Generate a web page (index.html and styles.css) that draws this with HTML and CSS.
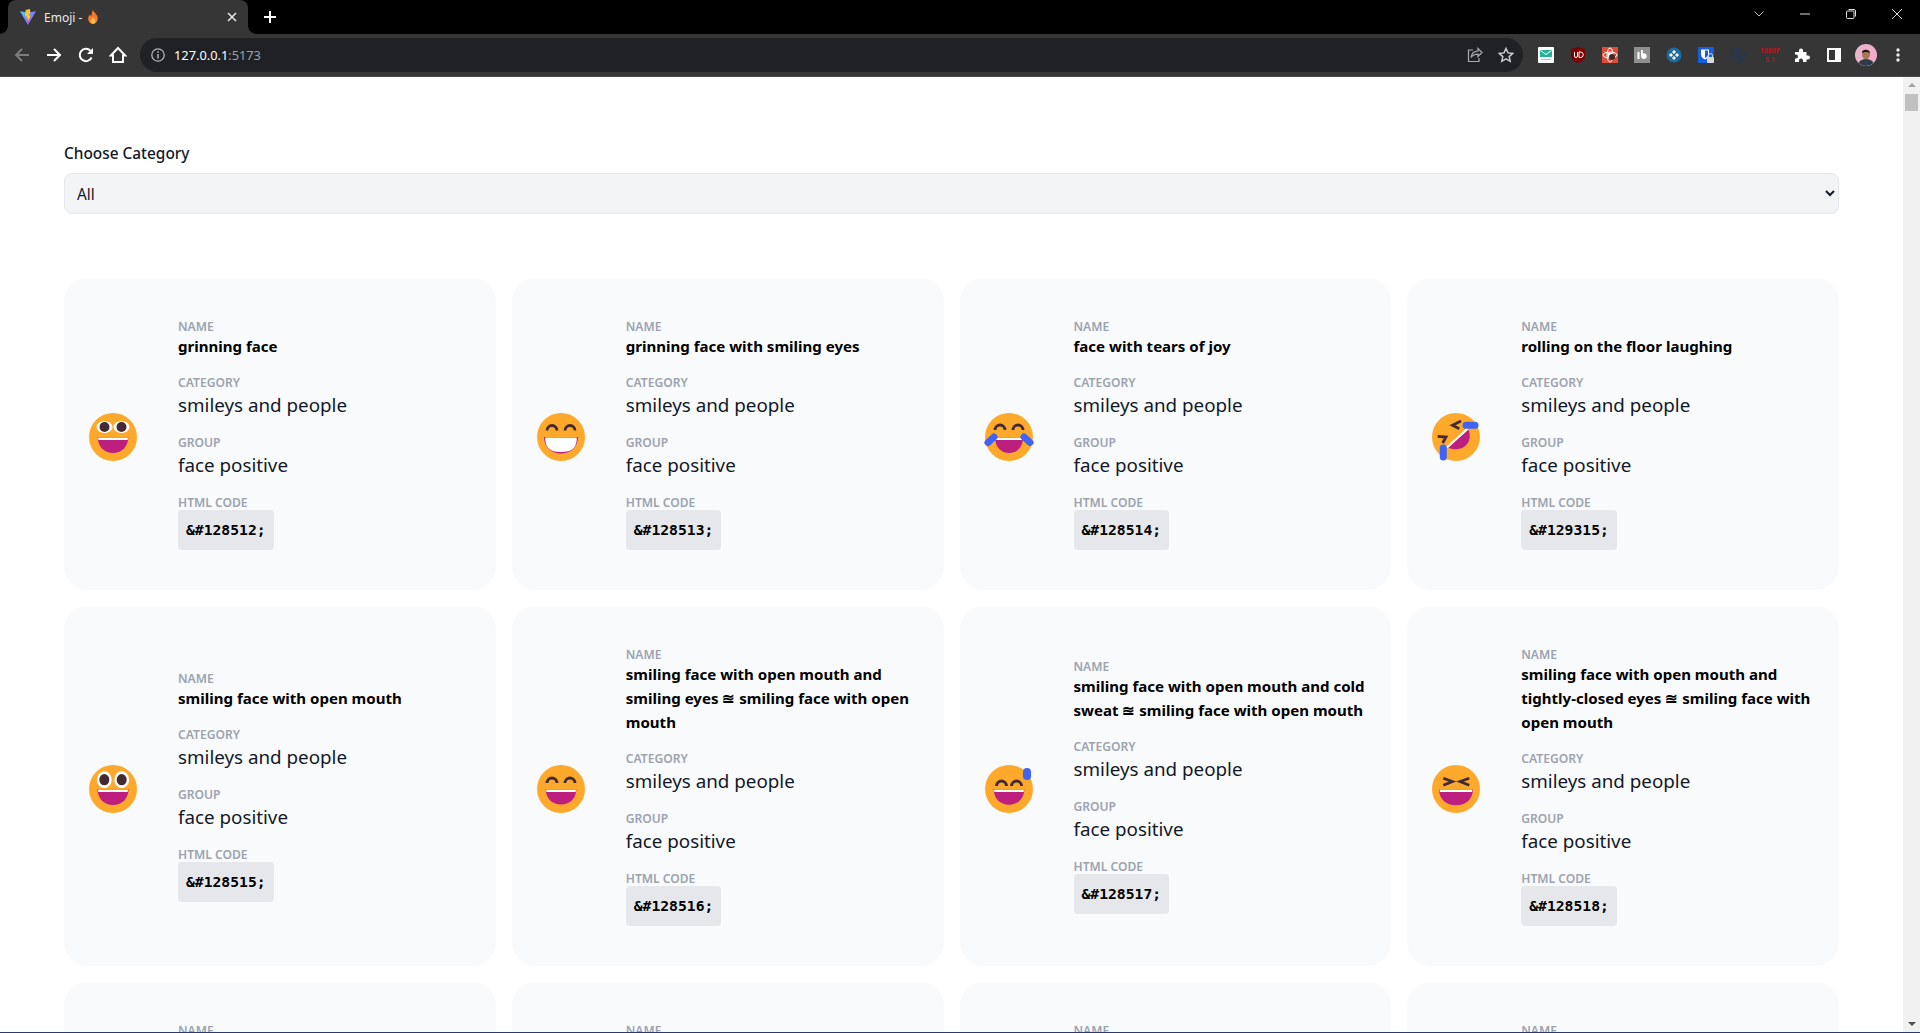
FILE: index.html
```html
<!DOCTYPE html>
<html lang="en">
<head>
<meta charset="utf-8">
<title>Emoji</title>
<link rel="stylesheet" href="styles.css">
</head>
<body>
<div class="window">
  <header class="titlebar">
    <div class="tab">
      <svg class="favicon" viewBox="0 0 16 16"><defs><linearGradient id="vp" x1="0" y1="0" x2="1" y2="1"><stop offset="0" stop-color="#41d1ff"/><stop offset="1" stop-color="#bd34fe"/></linearGradient></defs><path d="M0 2.2 8 3.4 16 2.2 8 16z" fill="url(#vp)"/><path d="M9.8 0 5.6 1 5.2 7.5 7 7.2 6.6 9.8 8 9.4 7.8 12.5 11 6.6 9 7 10.4 2.6z" fill="#ffc824"/></svg>
      <span class="tab-title">Emoji -</span>
      <svg class="flame" viewBox="0 0 10 14"><path d="M5 0c.5 2.300 4.800 4.300 4.800 8.600C9.800 11.600 7.600 14 5 14S.2 11.800.2 8.800c0-1.900 1-3.300 1.900-4.200.2 1 .6 1.700 1.300 2C3.600 4 3.700 1.800 5 0z" fill="#f4792b"/><path d="M5 7c.6 1.100 2.400 2.200 2.400 4.200 0 1.500-1.100 2.600-2.400 2.600s-2.400-1.100-2.400-2.600C2.600 9.500 4.400 8.500 5 7z" fill="#fdbb4a"/></svg>
      <svg class="tab-close" viewBox="0 0 10 10"><path d="M1 1l8 8M9 1l-8 8" stroke="#e8eaed" stroke-width="1.500" fill="none"/></svg>
    </div>
    <svg class="newtab" viewBox="0 0 12 12"><path d="M6 0v12M0 6h12" stroke="#fff" stroke-width="2" fill="none"/></svg>
    <div class="winctl">
      <span class="winbtn"><svg width="10" height="6" viewBox="0 0 10 6"><path d="M.5.500 5 5 9.500.500" stroke="#bbb" fill="none"/></svg></span>
      <span class="winbtn"><svg width="10" height="2" viewBox="0 0 10 2"><path d="M0 1h10" stroke="#ddd"/></svg></span>
      <span class="winbtn"><svg width="10" height="10" viewBox="0 0 10 10"><rect x=".5" y="2" width="7.500" height="7.500" rx="1" stroke="#ddd" fill="none"/><path d="M2.500 .5H8a1.500 1.500 0 0 1 1.500 1.500V7.500" stroke="#ddd" fill="none"/></svg></span>
      <span class="winbtn"><svg width="10" height="10" viewBox="0 0 10 10"><path d="M0 0l10 10M10 0 0 10" stroke="#ddd" fill="none"/></svg></span>
    </div>
  </header>
  <nav class="toolbar">
    <span class="navbtn"><svg width="16" height="16" viewBox="0 0 16 16"><path d="M15 8H2M8 2 2 8l6 6" stroke="#7c7c7c" stroke-width="2" fill="none"/></svg></span>
    <span class="navbtn"><svg width="16" height="16" viewBox="0 0 16 16"><path d="M1 8h13M8 2l6 6-6 6" stroke="#fff" stroke-width="2" fill="none"/></svg></span>
    <span class="navbtn"><svg width="16" height="16" viewBox="0 0 16 16"><path d="M13.600 10.500A6.200 6.200 0 1 1 12.400 3.600" stroke="#fff" stroke-width="2" fill="none"/><path d="M15 1v6H9z" fill="#fff"/></svg></span>
    <span class="navbtn"><svg width="18" height="18" viewBox="0 0 18 18"><path d="M9 2 1.800 9.500H4V16h10V9.500h2.200z" stroke="#fff" stroke-width="2" fill="none" stroke-linejoin="miter"/></svg></span>
    <div class="omnibox">
      <svg class="info" width="14" height="14" viewBox="0 0 14 14"><circle cx="7" cy="7" r="6.200" stroke="#b0b3b6" stroke-width="1.300" fill="none"/><path d="M7 6v4.500M7 3.300v1.500" stroke="#b0b3b6" stroke-width="1.500"/></svg>
      <span class="url">127.0.0.1<span class="url-port">:5173</span></span>
      <span class="spacer"></span>
      <svg class="omni-ico" width="16" height="16" viewBox="0 0 16 16"><path d="M11 1.500 15 5.500 11 9.500V7.200C7.500 7.200 5.500 8.300 4 10.500 4.500 6.500 7 4.200 11 3.900z" stroke="#a9abad" stroke-width="1.200" fill="none"/><path d="M6 3H1.500v11.500H12V11" stroke="#a9abad" stroke-width="1.200" fill="none"/></svg>
      <svg class="omni-ico" width="16" height="16" viewBox="0 0 16 16"><path d="M8 1.500l2 4.400 4.800.5-3.600 3.200 1 4.700L8 11.900l-4.200 2.400 1-4.700L1.200 6.400 6 5.900z" stroke="#c8cacc" stroke-width="1.500" fill="none"/></svg>
    </div>
    <div class="extensions">
      <span class="ext"><svg width="16" height="16" viewBox="0 0 16 16"><rect width="16" height="16" rx="1" fill="#fff"/><rect x="2" y="3" width="12" height="7" fill="#27b39a"/><path d="M2.500 3.500 8 7.500l5.500-4" stroke="#fff" fill="none"/><rect x="3" y="12" width="10" height="1" fill="#9cc"/></svg></span>
      <span class="ext"><svg width="14" height="16" viewBox="0 0 14 16"><path d="M7 0 14 2v7c0 3-3 5.500-7 7-4-1.500-7-4-7-7V2z" fill="#800000"/><path d="M3.500 5v4a1.500 1.500 0 0 0 3 0V5M8 5v5.500h1.500a2.700 2.700 0 0 0 0-5.500z" stroke="#fff" fill="none"/></svg></span>
      <span class="ext"><svg width="16" height="16" viewBox="0 0 16 16"><rect width="16" height="16" fill="#dd4b39"/><circle cx="8" cy="8" r="2.500" fill="#fff"/><ellipse cx="8" cy="8" rx="7" ry="3" stroke="#fff" fill="none"/><ellipse cx="8" cy="8" rx="3" ry="7" stroke="#fff" fill="none"/><circle cx="10" cy="10" r="3" fill="#402a22"/></svg></span>
      <span class="ext"><svg width="16" height="16" viewBox="0 0 16 16"><rect width="16" height="16" fill="#8f8f8f"/><path d="M3.500 5h2v7h-2zM7 3h1.800v3.400a2.900 2.900 0 1 1-1.800 2.700z" fill="#fff"/></svg></span>
      <span class="ext"><svg width="16" height="16" viewBox="0 0 16 16"><circle cx="8" cy="8" r="7.500" fill="#1f6b9e"/><path d="M8 3l2 2-2 2-2-2zM8 9l2 2-2 2-2-2zM3 8l2-2 2 2-2 2zM9 8l2-2 2 2-2 2z" fill="#fff"/></svg></span>
      <span class="ext"><svg width="16" height="16" viewBox="0 0 16 16"><rect width="16" height="16" rx="1" fill="#175ddc"/><path d="M3 2.500h8v5c0 2.500-2 4-4 5-2-1-4-2.500-4-5z" fill="#fff"/><path d="M7 3.500h3v4c0 1.700-1.500 2.700-3 3.500z" fill="#175ddc"/><rect x="9" y="10" width="7" height="6" rx="1" fill="#d8d8d8"/><path d="M10.500 10V8.500a2 2 0 0 1 4 0V10" stroke="#d8d8d8" fill="none"/></svg></span>
      <span class="ext"><svg width="16" height="16" viewBox="0 0 16 16"><circle cx="8" cy="8" r="7.200" stroke="#1c3a5e" stroke-width="1" fill="none"/><path d="M5 12 8 4l3 8M6 9.500h4" stroke="#1c3a5e" stroke-width="1.400" fill="none"/></svg></span>
      <span class="ext ext-res">1080P<br>5.1</span>
      <span class="ext"><svg width="16" height="16" viewBox="0 0 16 16"><path d="M1 5h4V3.500a2 2 0 0 1 4 0V5h3.500v3.500H14a2 2 0 0 1 0 4h-1.500V15H9v-1.500a2 2 0 0 0-4 0V15H1v-3.500h1a2 2 0 0 0 0-4H1z" fill="#fff"/></svg></span>
      <span class="ext"><svg width="14" height="14" viewBox="0 0 14 14"><rect x="1" y="1" width="12" height="12" stroke="#fff" stroke-width="2" fill="none"/><rect x="8" y="1" width="5" height="12" fill="#fff"/></svg></span>
      <span class="ext"><svg width="22" height="22" viewBox="0 0 22 22"><defs><linearGradient id="av" x1="0" y1="0" x2="1" y2="0"><stop offset="0" stop-color="#e9b6c9"/><stop offset="1" stop-color="#f2aacb"/></linearGradient></defs><circle cx="11" cy="11" r="11" fill="url(#av)"/><path d="M3.500 19c1.500-3 4.500-4 7.500-4s6 1 7.500 4a11 11 0 0 1-15 0z" fill="#2e3a4a"/><ellipse cx="11" cy="10.500" rx="4" ry="4.800" fill="#a4745b"/><path d="M7 9c-.5-4 7.500-4.500 8 0-2-1.500-6-1.500-8 0z" fill="#1d1718"/></svg></span>
      <span class="ext"><svg width="4" height="14" viewBox="0 0 4 14"><circle cx="2" cy="2" r="1.700" fill="#eee"/><circle cx="2" cy="7" r="1.700" fill="#eee"/><circle cx="2" cy="12" r="1.700" fill="#eee"/></svg></span>
    </div>
  </nav>
  <div class="viewport">
    <main class="page">
      <label class="select-label" for="cat">Choose Category</label>
      <select class="select" id="cat"><option>All</option></select>
      <section class="grid">

        <article class="card">
          <svg class="emoji" viewBox="-25 -32 58 58"><circle r="24" fill="#ffa92c"/><ellipse cx="-8.500" cy="-10" rx="8" ry="6" fill="#fff"/><ellipse cx="8.500" cy="-10" rx="8" ry="6" fill="#fff"/><circle cx="-8.500" cy="-10" r="5" fill="#432a33"/><circle cx="8.500" cy="-10" r="5" fill="#432a33"/><path d="M-15.300 0h30.600c0 9-6 16-15.300 16S-15.300 9-15.300 0z" fill="#bd1f7f"/><path d="M-15 .5h30l-.4 2.400h-29.200z" fill="#fff"/></svg>
          <div class="info-col">
            <div class="field"><span class="label">NAME</span><p class="name">grinning face</p></div>
            <div class="field"><span class="label">CATEGORY</span><p class="value">smileys and people</p></div>
            <div class="field"><span class="label">GROUP</span><p class="value">face positive</p></div>
            <div class="field"><span class="label">HTML CODE</span><code class="code">&amp;#128512;</code></div>
          </div>
        </article>

        <article class="card">
          <svg class="emoji" viewBox="-25 -32 58 58"><circle r="24" fill="#ffa92c"/><path d="M-14 -6.500a5 5 0 0 1 10 0M4 -6.500a5 5 0 0 1 10 0" stroke="#432a33" stroke-width="2.800" fill="none"/><path d="M-17 0H17c0 10-7 16.500-17 16.500S-17 10-17 0z" fill="#bd1f7f"/><path d="M-15.800 .5h31.600c0 5-1 8-3 10.500-3 3-7 4-12.800 4s-9.800-1-12.800-4c-2-2.500-3-5.500-3-10.500z" fill="#fff"/></svg>
          <div class="info-col">
            <div class="field"><span class="label">NAME</span><p class="name">grinning face with smiling eyes</p></div>
            <div class="field"><span class="label">CATEGORY</span><p class="value">smileys and people</p></div>
            <div class="field"><span class="label">GROUP</span><p class="value">face positive</p></div>
            <div class="field"><span class="label">HTML CODE</span><code class="code">&amp;#128513;</code></div>
          </div>
        </article>

        <article class="card">
          <svg class="emoji" viewBox="-25 -32 58 58"><circle r="24" fill="#ffa92c"/><path d="M-14 -7a5 5 0 0 1 10 0M4 -7a5 5 0 0 1 10 0" stroke="#432a33" stroke-width="2.800" fill="none"/><path d="M-14 0H14c0 10-6 16-14 16S-14 10-14 0z" fill="#bd1f7f"/><path d="M-14 .5H14l-.4 2.400h-27.200z" fill="#fff"/><path d="M-21 5.500-15 0M21 5.500 15 0" stroke="#3f63f5" stroke-width="7" stroke-linecap="round" fill="none"/></svg>
          <div class="info-col">
            <div class="field"><span class="label">NAME</span><p class="name">face with tears of joy</p></div>
            <div class="field"><span class="label">CATEGORY</span><p class="value">smileys and people</p></div>
            <div class="field"><span class="label">GROUP</span><p class="value">face positive</p></div>
            <div class="field"><span class="label">HTML CODE</span><code class="code">&amp;#128514;</code></div>
          </div>
        </article>

        <article class="card">
          <svg class="emoji" viewBox="-25 -32 58 58"><circle r="24" fill="#ffa92c"/><path d="M-9 10.500 12-8.500C18 4 8 17-9 10.500z" fill="#bd1f7f"/><path d="M-9 10.500 12-8.500" stroke="#fff" stroke-width="2.200"/><path d="M5-16-3.500-11.700 3.300-8.300M-18.300-.7-10 0-13.300 6" stroke="#432a33" stroke-width="2.800" fill="none"/><path d="M10-11.700H19M-12.700 11V20" stroke="#3f63f5" stroke-width="7" stroke-linecap="round"/></svg>
          <div class="info-col">
            <div class="field"><span class="label">NAME</span><p class="name">rolling on the floor laughing</p></div>
            <div class="field"><span class="label">CATEGORY</span><p class="value">smileys and people</p></div>
            <div class="field"><span class="label">GROUP</span><p class="value">face positive</p></div>
            <div class="field"><span class="label">HTML CODE</span><code class="code">&amp;#129315;</code></div>
          </div>
        </article>

        <article class="card">
          <svg class="emoji" viewBox="-25 -32 58 58"><circle r="24" fill="#ffa92c"/><ellipse cx="-8.700" cy="-9.300" rx="7.400" ry="8.400" fill="#fff"/><ellipse cx="8.700" cy="-9.300" rx="7.400" ry="8.400" fill="#fff"/><ellipse cx="-8.700" cy="-9.300" rx="5" ry="5.600" fill="#432a33"/><ellipse cx="8.700" cy="-9.300" rx="5" ry="5.600" fill="#432a33"/><path d="M-15.500 0H15.500c0 9-6 16-15.500 16S-15.500 9-15.500 0z" fill="#bd1f7f"/><path d="M-15 .5h30l-.4 2.400h-29.200z" fill="#fff"/></svg>
          <div class="info-col">
            <div class="field"><span class="label">NAME</span><p class="name">smiling face with open mouth</p></div>
            <div class="field"><span class="label">CATEGORY</span><p class="value">smileys and people</p></div>
            <div class="field"><span class="label">GROUP</span><p class="value">face positive</p></div>
            <div class="field"><span class="label">HTML CODE</span><code class="code">&amp;#128515;</code></div>
          </div>
        </article>

        <article class="card">
          <svg class="emoji" viewBox="-25 -32 58 58"><circle r="24" fill="#ffa92c"/><path d="M-14 -6a5 5 0 0 1 10 0M4 -6a5 5 0 0 1 10 0" stroke="#432a33" stroke-width="2.800" fill="none"/><path d="M-15.300 0H15.300c0 9-6 15.500-15.300 15.500S-15.300 9-15.300 0z" fill="#bd1f7f"/><path d="M-15 .5h30l-.4 2.400h-29.200z" fill="#fff"/></svg>
          <div class="info-col">
            <div class="field"><span class="label">NAME</span><p class="name">smiling face with open mouth and smiling eyes ≊ smiling face with open mouth</p></div>
            <div class="field"><span class="label">CATEGORY</span><p class="value">smileys and people</p></div>
            <div class="field"><span class="label">GROUP</span><p class="value">face positive</p></div>
            <div class="field"><span class="label">HTML CODE</span><code class="code">&amp;#128516;</code></div>
          </div>
        </article>

        <article class="card">
          <svg class="emoji" viewBox="-25 -32 58 58"><circle r="24" fill="#ffa92c"/><path d="M-12.500 -3a5 5 0 0 1 10 0M2.500 -3a5 5 0 0 1 10 0" stroke="#432a33" stroke-width="2.800" fill="none"/><path d="M-15.300 0H15.300c0 9-6 15.700-15.300 15.700S-15.300 9-15.300 0z" fill="#bd1f7f"/><path d="M-15 .5h30l-.4 2.400h-29.200z" fill="#fff"/><path d="M18-17V-13" stroke="#3f63f5" stroke-width="8" stroke-linecap="round"/></svg>
          <div class="info-col">
            <div class="field"><span class="label">NAME</span><p class="name">smiling face with open mouth and cold sweat ≊ smiling face with open mouth</p></div>
            <div class="field"><span class="label">CATEGORY</span><p class="value">smileys and people</p></div>
            <div class="field"><span class="label">GROUP</span><p class="value">face positive</p></div>
            <div class="field"><span class="label">HTML CODE</span><code class="code">&amp;#128517;</code></div>
          </div>
        </article>

        <article class="card">
          <svg class="emoji" viewBox="-25 -32 58 58"><circle r="24" fill="#ffa92c"/><path d="M-12.700-10.800-3.500-7.500-12.700-3.700M13.300-10.800 4-7.500 13.300-3.700" stroke="#432a33" stroke-width="2.800" fill="none"/><path d="M-17 0H17c0 10-7 16.300-17 16.300S-17 10-17 0z" fill="#bd1f7f"/><path d="M-16.500 .5h33l-.4 2.400h-32.200z" fill="#fff"/></svg>
          <div class="info-col">
            <div class="field"><span class="label">NAME</span><p class="name">smiling face with open mouth and tightly-closed eyes ≊ smiling face with open mouth</p></div>
            <div class="field"><span class="label">CATEGORY</span><p class="value">smileys and people</p></div>
            <div class="field"><span class="label">GROUP</span><p class="value">face positive</p></div>
            <div class="field"><span class="label">HTML CODE</span><code class="code">&amp;#128518;</code></div>
          </div>
        </article>

        <article class="card">
          <div class="emoji"></div>
          <div class="info-col">
            <div class="field"><span class="label">NAME</span><p class="name">winking face</p></div>
            <div class="field"><span class="label">CATEGORY</span><p class="value">smileys and people</p></div>
            <div class="field"><span class="label">GROUP</span><p class="value">face positive</p></div>
            <div class="field"><span class="label">HTML CODE</span><code class="code">&amp;#128521;</code></div>
          </div>
        </article>
        <article class="card">
          <div class="emoji"></div>
          <div class="info-col">
            <div class="field"><span class="label">NAME</span><p class="name">smiling face with smiling eyes</p></div>
            <div class="field"><span class="label">CATEGORY</span><p class="value">smileys and people</p></div>
            <div class="field"><span class="label">GROUP</span><p class="value">face positive</p></div>
            <div class="field"><span class="label">HTML CODE</span><code class="code">&amp;#128522;</code></div>
          </div>
        </article>
        <article class="card">
          <div class="emoji"></div>
          <div class="info-col">
            <div class="field"><span class="label">NAME</span><p class="name">face savouring delicious food</p></div>
            <div class="field"><span class="label">CATEGORY</span><p class="value">smileys and people</p></div>
            <div class="field"><span class="label">GROUP</span><p class="value">face positive</p></div>
            <div class="field"><span class="label">HTML CODE</span><code class="code">&amp;#128523;</code></div>
          </div>
        </article>
        <article class="card">
          <div class="emoji"></div>
          <div class="info-col">
            <div class="field"><span class="label">NAME</span><p class="name">smiling face with sunglasses</p></div>
            <div class="field"><span class="label">CATEGORY</span><p class="value">smileys and people</p></div>
            <div class="field"><span class="label">GROUP</span><p class="value">face positive</p></div>
            <div class="field"><span class="label">HTML CODE</span><code class="code">&amp;#128526;</code></div>
          </div>
        </article>
      </section>
    </main>
    <aside class="scrollbar">
      <span class="sb-up"></span>
      <span class="sb-thumb"></span>
      <span class="spacer"></span>
      <span class="sb-down"></span>
    </aside>
  </div>
  <div class="bottom-line"></div>
</div>
</body>
</html>
```
FILE: styles.css
```css
* { box-sizing: border-box; }
html, body { margin: 0; padding: 0; height: 100%; overflow: hidden; background: #fff; }
body { font-family: "Noto Sans", "Open Sans", sans-serif; color: #000; }
p { margin: 0; }

.window { display: flex; flex-direction: column; height: 1033px; }

.titlebar { display: flex; align-items: flex-start; height: 34px; background: #000; padding-left: 8px; flex: none; }
.tab { position: relative; display: flex; align-items: center; width: 240px; height: 34px; background: #363636; border-radius: 8px 8px 0 0; padding: 0 11px 0 12px; color: #e8eaed; font-size: 12px; }
.tab::before, .tab::after { content: ""; position: absolute; bottom: 0; width: 8px; height: 8px; }
.tab::before { left: -8px; background: radial-gradient(circle at 0 0, #000 7.500px, #363636 8px); }
.tab::after { right: -8px; background: radial-gradient(circle at 100% 0, #000 7.500px, #363636 8px); }
.favicon { width: 16px; height: 16px; flex: none; margin-right: 8px; }
.tab-title { white-space: nowrap; }
.flame { width: 10px; height: 14px; margin-left: 6px; flex: none; }
.tab-close { width: 10px; height: 10px; margin-left: auto; margin-right: 0; }
.newtab { width: 12px; height: 12px; margin: 11px 0 0 16px; }
.winctl { display: flex; margin-left: auto; height: 28px; }
.winbtn { display: flex; align-items: center; justify-content: center; width: 46px; height: 28px; }

.toolbar { display: flex; align-items: center; height: 43px; background: #363636; border-bottom: 1px solid #4a4a4a; padding: 0 6px; flex: none; }
.navbtn { display: flex; align-items: center; justify-content: center; width: 32px; height: 32px; flex: none; }
.omnibox { display: flex; align-items: center; width: 1383px; height: 34px; margin-left: 6px; background: #202124; border-radius: 17px; padding: 0 9px 0 11px; flex: none; }
.info { flex: none; }
.url { margin-left: 9px; font-size: 12.800px; color: #fff; }
.url-port { color: #9aa0a6; }
.spacer { flex: 1; }
.omni-ico { margin-left: 15px; flex: none; }
.extensions { display: flex; align-items: center; margin-left: 7px; }
.ext { display: flex; align-items: center; justify-content: center; width: 32px; height: 32px; flex: none; }
.ext-res { font-size: 7px; line-height: 9px; color: #c3121d; text-align: center; font-weight: 600; display: block; padding-top: 7px; }

.viewport { display: flex; flex: 1; min-height: 0; overflow: hidden; }
.page { flex: 1; min-width: 0; padding: 64px 64px 0; height: 100%; overflow: hidden; }
.select-label { display: block; font-size: 15.400px; line-height: 26px; font-weight: 500; color: #111827; margin-bottom: 6px; }
.select { display: block; width: 100%; height: 41px; padding: 9px 8px 7px; background: #f3f4f6; border: 1px solid #e5e7eb; border-radius: 8px; font: inherit; font-size: 15.400px; color: #111827; }

.grid { display: grid; grid-template-columns: repeat(4, 1fr); gap: 16px; margin-top: 64px; }
.card { display: flex; align-items: center; gap: 32px; background: #f9fafb; border-radius: 24px; padding: 40px 24px; }
.emoji { width: 58px; height: 58px; flex: none; display: block; }
.info-col { display: flex; flex-direction: column; gap: 16px; min-width: 0; flex: 1; }
.field { display: flex; flex-direction: column; align-items: flex-start; }
.label { font-size: 12.100px; line-height: 18px; margin-bottom: -2px; font-weight: 600; color: #9ca3af; }
.name { font-size: 15.050px; line-height: 24px; font-weight: 700; color: #000; }
.value { font-size: 18.800px; line-height: 30px; margin-bottom: -2px; color: #111827; }
.code { display: block; font-family: "DejaVu Sans Mono", monospace; font-weight: 700; font-size: 14.700px; line-height: 24px; padding: 8px; background: #e5e7eb; border-radius: 4px; color: #000; }

.scrollbar { display: flex; flex-direction: column; align-items: center; width: 17px; background: #f1f1f1; flex: none; }
.sb-up { width: 0; height: 0; margin-top: 6px; border-left: 4px solid transparent; border-right: 4px solid transparent; border-bottom: 4px solid #a3a3a3; }
.sb-thumb { width: 13px; height: 17px; margin-top: 7px; background: #c1c1c1; }
.sb-down { width: 0; height: 0; margin-bottom: 6px; border-left: 4px solid transparent; border-right: 4px solid transparent; border-top: 4px solid #505050; }
.bottom-line { height: 1px; background: #2b3a67; flex: none; }
```
